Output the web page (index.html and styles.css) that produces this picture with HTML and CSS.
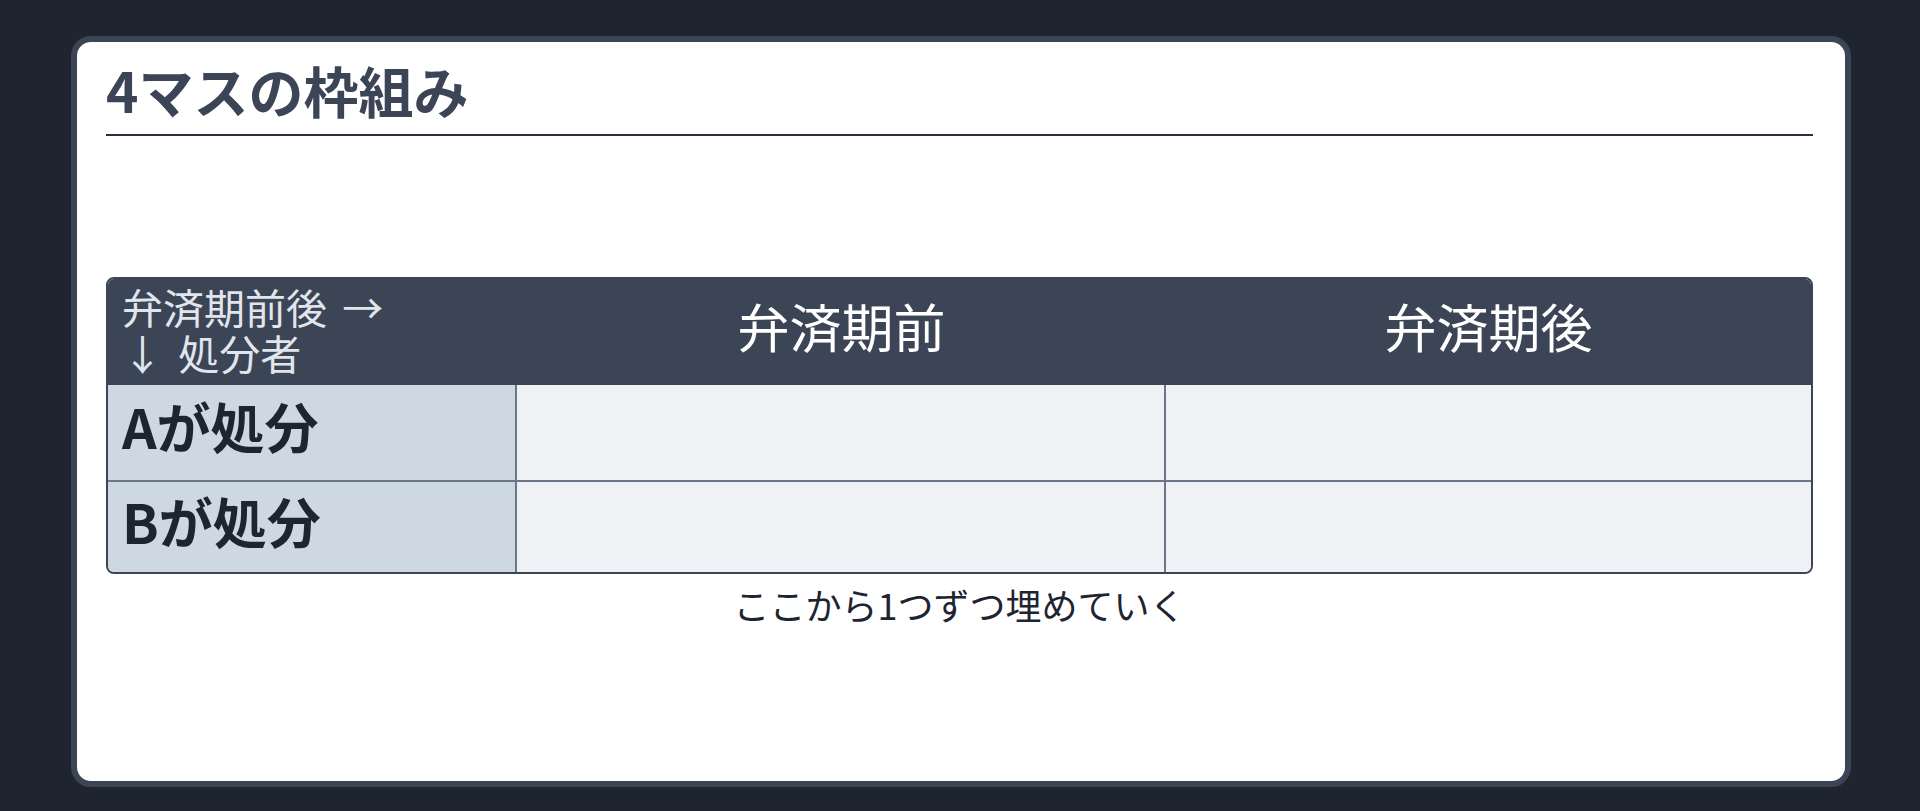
FILE: index.html
```html
<!DOCTYPE html>
<html lang="ja">
<head>
    <meta charset="UTF-8">
    <meta name="viewport" content="width=device-width, initial-scale=1.0">
    <title>4マスの枠組み</title>
    <link rel="stylesheet" href="styles.css">
</head>
<body>
    <div class="slide">
        <h1 class="slide-title">4マスの枠組み</h1>

        <div class="slide-body">
            <div class="matrix">
                <div class="head corner">
                    <span>弁済期前後 →</span>
                    <span>↓ 処分者</span>
                </div>
                <div class="head">弁済期前</div>
                <div class="head">弁済期後</div>

                <div class="label">Aが処分</div>
                <div class="cell"></div>
                <div class="cell last"></div>

                <div class="label bottom">Bが処分</div>
                <div class="cell bottom"></div>
                <div class="cell bottom last"></div>
            </div>
            <p class="caption">ここから1つずつ埋めていく</p>
        </div>
    </div>
</body>
</html>
```

FILE: styles.css
```css
:root {
    --page: #1f2530;
    --slate: #3b4556;
    --ink: #1e2430;
    --line: #6b7686;
    --label-bg: #cdd8e2;
    --cell-bg: #eff1f5;
}

* {
    box-sizing: border-box;
}

body {
    margin: 0;
    height: 811px;
    padding: 36px 69px 24px 71px;
    background-color: var(--page);
    font-family: "Noto Sans CJK JP", "Noto Sans", sans-serif;
    color: var(--ink);
}

.slide {
    height: 100%;
    background-color: #fff;
    border: 6px solid var(--slate);
    border-radius: 20px;
    padding: 0 32px 0 29px;
    display: flex;
    flex-direction: column;
}

.slide-title {
    margin: 0;
    padding: 15px 0 12px;
    font-size: 55px;
    line-height: 65px;
    font-weight: 700;
    color: var(--slate);
    border-bottom: 2px solid #2b323e;
}

.slide-body {
    flex: 1;
    display: flex;
    flex-direction: column;
    justify-content: center;
}

.matrix {
    display: grid;
    grid-template-columns: 409px 649px 1fr;
    grid-template-rows: 106px 97px 90px;
    border: 2px solid var(--slate);
    border-radius: 8px;
    overflow: hidden;
}

.head {
    background-color: var(--slate);
    color: #fff;
    font-size: 52px;
    display: flex;
    align-items: center;
    justify-content: center;
    padding-bottom: 14px;
}

.corner {
    flex-direction: column;
    align-items: flex-start;
    padding: 0 0 6px 14px;
    font-size: 41px;
    line-height: 46px;
    word-spacing: 6px;
    color: #e2e6ec;
}

.label {
    background-color: var(--label-bg);
    font-size: 54px;
    font-weight: 700;
    display: flex;
    align-items: center;
    padding: 0 0 14px 14px;
    border-right: 2px solid var(--line);
    border-bottom: 2px solid var(--line);
}

.cell {
    background-color: var(--cell-bg);
    border-right: 2px solid var(--line);
    border-bottom: 2px solid var(--line);
}

.cell.last {
    border-right: none;
}

.bottom {
    border-bottom: none;
}

.caption {
    margin: 0;
    padding: 8px 0 14px;
    text-align: center;
    font-size: 36px;
    line-height: 44px;
}
```
